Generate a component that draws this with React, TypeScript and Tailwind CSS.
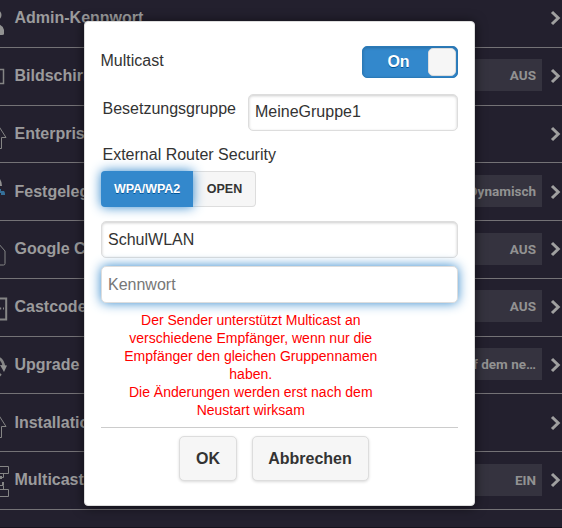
import React from "react";

type Row = { label: string; value?: string; height: string; badgeTop?: string; icon: React.ReactNode };

const rows: Row[] = [
  {
    label: "Admin-Kennwort",
    height: "h-[58px]",
    icon: (
      <g fill="#929292" stroke="none">
        <circle cx="-4" cy="25" r="5.5" />
        <path d="M-12 45v-5q0-5 5-6h5q5 1 6 6v4q0 1-2 1z" />
      </g>
    ),
  },
  {
    label: "Bildschirm",
    value: "AUS",
    height: "h-[58px]",
    badgeTop: "mt-[11px]",
    icon: <path d="M-16 21.500H3.500v14H-16z" />,
  },
  {
    label: "Enterprise",
    height: "h-[57px]",
    icon: <path d="M-8 31 -1 20.500 6 31.500H1.500V42.500H-3" strokeWidth="1" />,
  },
  {
    label: "Festgelegt",
    value: "Dynamisch",
    height: "h-[58px] pt-px",
    badgeTop: "mt-[11px]",
    icon: (
      <g stroke="none">
        <path d="M-3 15h3q2 3 2 7h-5z" fill="#929292" />
        <path d="M-3 25h4v2h3q1 1 1 3v1H1v-2h-4z" fill="#356f98" />
      </g>
    ),
  },
  {
    label: "Google Cast",
    value: "AUS",
    height: "h-[58px]",
    badgeTop: "mt-[12px]",
    icon: <path d="M-10 44H3.500q1.500 0 1.500-1.500V30L-2 22" strokeWidth="1" />,
  },
  {
    label: "Castcode",
    value: "AUS",
    height: "h-[58px]",
    badgeTop: "mt-[11px]",
    icon: <path d="M-12 19.500H6.200V40.500H-12M0 29.500h1.200M3 29.500h1" strokeWidth="2" />,
  },
  {
    label: "Upgrade",
    value: "Auf dem ne…",
    height: "h-[57px]",
    badgeTop: "mt-[11px]",
    icon: (
      <g>
        <path d="M-5 20Q3 21 4 30" strokeWidth="2.5" />
        <path d="M0 28l7 .5-3 6.500z" fill="#929292" stroke="none" />
        <path d="M-1 39l2-2" strokeWidth="2" />
      </g>
    ),
  },
  {
    label: "Installation",
    height: "h-[58px] pt-px",
    icon: <path d="M-8 31 -1 20.500 6 31.500H1.500V42.500H-3" strokeWidth="1" />,
  },
  {
    label: "Multicast",
    value: "EIN",
    height: "h-[58px]",
    badgeTop: "mt-[12px]",
    icon: (
      <g strokeWidth="1">
        <path d="M-4 14.500H8.500V21.500H-4M-4 37.500H8.500V44.500H-4" />
        <path d="M-2 25.500H3.500V22M-2 33.500H3.500V37" />
        <path d="M1 24v3M3 30v3" strokeWidth="2" />
      </g>
    ),
  },
];

function SettingsRow({ label, value, height, badgeTop = "", icon }: Row) {
  return (
    <div className={`flex shrink-0 items-start border-b border-[#747276] ${height}`}>
      <svg width="14.5" height="56" className="shrink-0" fill="none" stroke="#858585" strokeWidth="1.5">
        {icon}
      </svg>
      <span className="mt-[18px] flex-1 whitespace-nowrap text-base leading-5 font-bold text-[#9b9b9c]">{label}</span>
      {value && (
        <span
          className={`flex h-8 w-[100px] items-center justify-end bg-[#35333f] pr-[6px] font-['Roboto',sans-serif] text-[13.5px] font-bold whitespace-nowrap text-[#929292] ${badgeTop}`}
        >
          {value}
        </span>
      )}
      <svg width="20" height="56" className="shrink-0" fill="none" stroke="#a0a0a0" strokeWidth="3">
        <path d="M10 22l6.200 6-6.200 6" />
      </svg>
    </div>
  );
}

const field =
  "flex h-[37px] items-center rounded-[5px] border border-[#ddd] bg-white px-[6px] text-base";

export default function App() {
  return (
    <div className="relative h-[528px] w-[562px] overflow-hidden bg-[#23202e] font-['Liberation_Sans',Arial,sans-serif]">
      <div className="-mt-[10px] flex h-[538px] flex-col border-b border-[#16121d]">
        {rows.map((row) => (
          <SettingsRow key={row.label} {...row} />
        ))}
      </div>

      <div className="absolute top-[21px] left-[84px] flex h-[485px] w-[391px] flex-col rounded-[4px] border border-[#ddd] bg-white px-4 pt-6 text-[#333] shadow-[0_1px_12px_rgba(0,0,0,0.6)]">
        <div className="flex h-8 justify-between">
          <span className="-ml-[0.5px] mt-[5px] text-base leading-5">Multicast</span>
          <div className="flex h-8 w-24 items-center justify-end rounded-[5px] border border-[#2a7ab8] bg-[#38c] pr-px shadow-[inset_0_1px_3px_rgba(0,0,0,0.2)]">
            <span className="flex-1 pl-[6px] text-center text-base font-bold text-white [text-shadow:0_1px_0_#059]">On</span>
            <span className="h-7 w-[28px] rounded-[5px] border border-[#ddd] bg-[#f6f6f6]" />
          </div>
        </div>

        <div className="mt-4 flex justify-between pl-[1.5px]">
          <span className="mt-[5px] text-base leading-5">Besetzungsgruppe</span>
          <div className={`${field} w-[210px] pb-[2px] shadow-[inset_0_1px_3px_rgba(0,0,0,0.2)]`}>MeineGruppe1</div>
        </div>

        <div className="mt-[14px] pl-[1.5px] text-base leading-5">External Router Security</div>

        <div className="mt-[6px] flex h-9 text-[12.5px] font-bold">
          <div className="z-10 flex w-[92px] items-center justify-center rounded-l-[4px] bg-[#38c] tracking-[-0.1px] text-white shadow-[0_0_12px_#38c] [text-shadow:0_1px_0_#059]">
            WPA/WPA2
          </div>
          <div className="flex w-[63px] items-center justify-center rounded-r-[4px] border border-l-0 border-[#ddd] bg-[#f6f6f6] pl-px">
            OPEN
          </div>
        </div>

        <div className={`${field} mt-[14px] shadow-[inset_0_1px_3px_rgba(0,0,0,0.2)]`}>SchulWLAN</div>
        <div className={`${field} mt-2 text-[#777] shadow-[0_0_12px_#38c]`}>Kennwort</div>

        <p className="mt-2 mr-[57.5px] text-center text-sm leading-[18px] text-[#f00]">
          Der Sender unterstützt Multicast an
          <br />
          verschiedene Empfänger, wenn nur die
          <br />
          Empfänger den gleichen Gruppennamen
          <br />
          haben.
          <br />
          Die Änderungen werden erst nach dem
          <br />
          Neustart wirksam
        </p>

        <div className="mt-2 flex justify-center gap-[15px] border-t border-[#ccc] pt-2 pr-[11px] text-base font-bold">
          <div className="flex h-[45px] w-[58px] items-center justify-center rounded-[5px] border border-[#ddd] bg-[#f6f6f6] shadow-[0_1px_3px_rgba(0,0,0,0.15)]">
            OK
          </div>
          <div className="flex h-[45px] w-[117px] items-center justify-center rounded-[5px] border border-[#ddd] bg-[#f6f6f6] pr-px shadow-[0_1px_3px_rgba(0,0,0,0.15)]">
            Abbrechen
          </div>
        </div>
      </div>
    </div>
  );
}
